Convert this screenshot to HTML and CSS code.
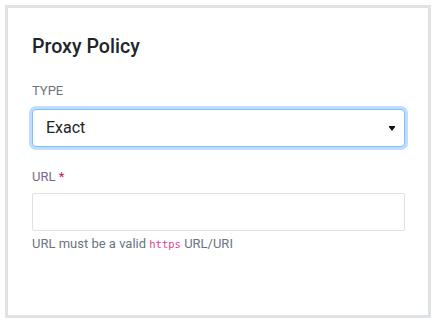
FILE: index.html
```html
<!DOCTYPE html>
<html>
<head>
<meta charset="utf-8">
<link rel="stylesheet" href="styles.css">
</head>
<body>
<div class="card">
  <h2 class="title">Proxy Policy</h2>
  <div class="field">
    <div class="label">TYPE</div>
    <div class="control select">
      <span class="select-value">Exact</span>
      <span class="caret"></span>
    </div>
  </div>
  <div class="field field-url">
    <div class="label label-req">URL <span class="req">*</span></div>
    <div class="control input"></div>
    <div class="help">URL must be a valid <code>https</code> URL/URI</div>
  </div>
</div>
</body>
</html>
```
FILE: styles.css
```css
* { box-sizing: border-box; }
html, body { margin: 0; padding: 0; background: #fff; }
body {
  font-family: Roboto, "Liberation Sans", sans-serif;
  color: #212529;
  padding: 5px 9px 4px 5px;
}
.card {
  width: 426px;
  height: 313px;
  border: 3px solid #dfe3e6;
  padding: 27px 23px 24px 24px;
}
.title {
  margin: 0 0 22px 0;
  font-size: 19.6px;
  font-weight: 500;
  line-height: 24px;
  color: #212529;
}
.label {
  font-size: 13px;
  line-height: 19.5px;
  color: #6c757d;
  margin-bottom: 8px;
}
.label-req { color: #77698a; margin-bottom: 7px; }
.req { color: #c2185b; }
.field-url { margin-top: 20px; }
.control {
  width: 100%;
  height: 38px;
  font-size: 16px;
  color: #212529;
  background: #fff;
}
.select {
  display: flex;
  align-items: center;
  justify-content: space-between;
  border: 1px solid #80bdff;
  border-radius: 4px;
  padding: 0 9px 0 13px;
  box-shadow: 0 0 0 3px rgba(0, 123, 255, 0.25);
}
.caret {
  position: relative;
  width: 0;
  height: 0;
  margin-top: 2px;
  border-left: 3px solid transparent;
  border-right: 3px solid transparent;
  border-top: 4px solid #111;
}
.caret::before {
  content: "";
  position: absolute;
  left: -3px;
  top: -5px;
  width: 6px;
  height: 1px;
  background: #111;
}
.input {
  border: 1px solid #e1e1e1;
  border-radius: 2px;
}
.help {
  margin-top: 3px;
  font-size: 13px;
  line-height: 19.5px;
  color: #6c757d;
}
code {
  font-family: "DejaVu Sans Mono", "Liberation Mono", monospace;
  font-size: 10.5px;
  color: #e83e8c;
}
```
